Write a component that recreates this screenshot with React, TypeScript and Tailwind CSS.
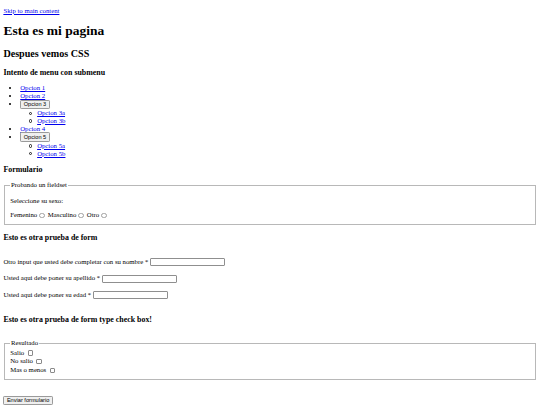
import React from "react";

const link = "text-[#0000ee] underline";
const btn =
  "font-['Liberation_Sans',Arial,sans-serif] text-[5.625px] leading-[6.47px] px-[2.5px] py-[0.45px] border border-[#9a9a9a] rounded-[1.2px] bg-[#efefef] text-black";
const field =
  "inline-block align-middle w-[75px] h-[8px] border border-[#8f8f8f] rounded-[1px] bg-white";
const radio =
  "inline-block align-middle appearance-none w-[5.5px] h-[5.5px] ml-[2.1px] mr-[1.27px] rounded-full border border-[#a0a0a0] bg-white";
const check =
  "inline-block align-middle appearance-none w-[5.3px] h-[5.3px] ml-[1.7px] mr-[1.27px] rounded-[1px] border border-[#8a8a8a] bg-white";
const h3 = "text-[7.9px] leading-[9.07px] font-bold";

function SubItem({ label }: { label: string }) {
  return (
    <li className="list-none">
      <span className="inline-block align-middle w-[3.2px] h-[3.2px] -ml-[8.2px] mr-[5px] mb-[0.5px] rounded-full border-[0.7px] border-[#222]" />
      <a href="#" className={link}>
        {label}
      </a>
    </li>
  );
}

export default function App() {
  return (
    <div className="flex flex-col px-[3.375px] pt-[6.5px] pb-[4px] font-['Liberation_Serif','Times_New_Roman',serif] text-[6.75px] leading-[7.76px] text-black bg-white">
      <p>
        <a href="#main" className={link}>
          Skip to main content
        </a>
      </p>
      <h1 className="mt-[8.5px] text-[13.5px] leading-[15.5px] font-bold">Esta es mi pagina</h1>
      <h2 className="mt-[9.6px] text-[10.125px] leading-[11.63px] font-bold">Despues vemos CSS</h2>
      <h3 className={"mt-[8.2px] " + h3}>Intento de menu con submenu</h3>
      <ul className="mt-[7.5px] list-disc pl-[16.875px]">
        <li>
          <a href="#" className={link}>Opcion 1</a>
        </li>
        <li>
          <a href="#" className={link}>Opcion 2</a>
        </li>
        <li>
          <button className={btn}>Opcion 3</button>
          <ul className="pl-[16.875px]">
            <SubItem label="Opcion 3a" />
            <SubItem label="Opcion 3b" />
          </ul>
        </li>
        <li>
          <a href="#" className={link}>Opcion 4</a>
        </li>
        <li>
          <button className={btn}>Opcion 5</button>
          <ul className="pl-[16.875px]">
            <SubItem label="Opcion 5a" />
            <SubItem label="Opcion 5b" />
          </ul>
        </li>
      </ul>
      <h3 className={"mt-[7.3px] " + h3}>Formulario</h3>
      <fieldset className="mt-[7.6px] mx-[0.84px] border border-[#b8b8b8] px-[5.06px] pt-[1px] pb-[4.6px]">
        <legend className="px-[0.84px]">Probando un fieldset</legend>
        <p className="mt-[6.5px] mb-[6.75px]">Seleccione su sexo:</p>
        <div className="leading-[8px]">
          Femenino<input type="radio" name="sexo" className={radio} /> Masculino
          <input type="radio" name="sexo" className={radio} /> Otro
          <input type="radio" name="sexo" className={radio} />
        </div>
      </fieldset>
      <h3 className={"mt-[8.8px] " + h3}>Esto es otra prueba de form</h3>
      <div className="mt-[14.2px] flex flex-col gap-[7.2px]">
        <p className="leading-[9px]">
          Otro input que usted debe completar con su nombre * <input type="text" className={field} />
        </p>
        <p className="leading-[9px]">
          Usted aqui debe poner su apellido * <input type="text" className={field} />
        </p>
        <p className="leading-[9px]">
          Usted aqui debe poner su edad * <input type="text" className={field} />
        </p>
      </div>
      <h3 className={"mt-[15.4px] " + h3}>Esto es otra prueba de form type check box!</h3>
      <fieldset className="mt-[15.6px] mx-[0.84px] border border-[#b8b8b8] px-[5.06px] pt-[1.3px] pb-[3.8px]">
        <legend className="px-[0.84px]">Resultado</legend>
        <div className="leading-[8.85px]">
          Salio <input type="checkbox" className={check} />
        </div>
        <div className="leading-[8.85px]">
          No salio <input type="checkbox" className={check} />
        </div>
        <div className="leading-[8.85px]">
          Mas o menos <input type="checkbox" className={check} />
        </div>
      </fieldset>
      <div className="mt-[16.2px]">
        <button className={btn}>Enviar formulario</button>
      </div>
    </div>
  );
}
